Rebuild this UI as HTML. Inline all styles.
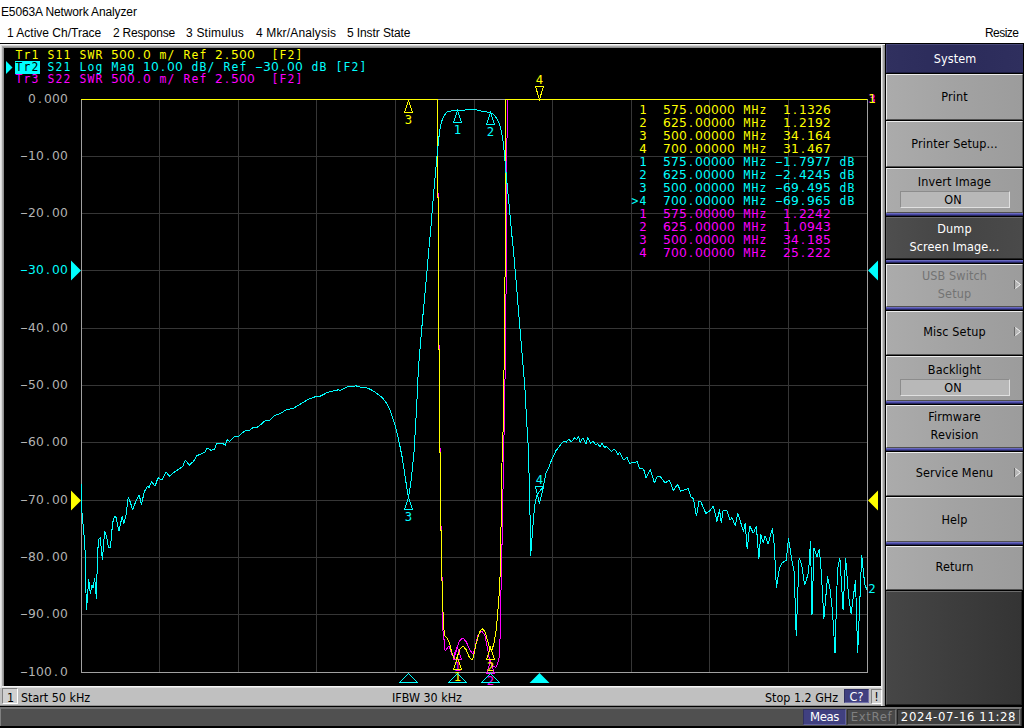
<!DOCTYPE html>
<html><head><meta charset="utf-8"><title>E5063A Network Analyzer</title>
<style>
html,body{margin:0;padding:0}
body{width:1024px;height:728px;position:relative;overflow:hidden;background:#fff;font-family:"Liberation Sans",sans-serif;}
div,span,i{position:absolute;box-sizing:border-box}
.ui{font-size:12px;color:#000;white-space:nowrap;line-height:14px}
#title{left:1px;top:5px;letter-spacing:-.13px}
.mi{top:26px}
#frame{left:0;top:43px;width:1024px;height:685px;background:#000}
#ft{left:0;top:44px;width:885px;height:4px;background:linear-gradient(#f8f8f8 0 1px,#d4d4d4 1px 2px,#a8a8a8 2px 3px,#909090 3px 4px)}
#fL{left:0;top:44px;width:4px;height:662px;background:linear-gradient(90deg,#e8e8e8 0 1px,#d8d8d8 1px 2px,#a8a8a8 2px 3px,#909090 3px 4px);clip-path:polygon(0 0,4px 4px,4px 100%,0 100%)}
#fr{left:881px;top:45px;width:4px;height:661px;background:linear-gradient(90deg,#f0f0f0 0 1px,#c8c8c8 1px 2px,#a0a0a0 2px 3px,#8c8c8c 3px 4px)}
#scr{left:4px;top:48px;width:877px;height:638px;background:#000}
#fb{left:2px;top:686px;width:879px;height:2px;background:linear-gradient(#f4f4f4 0 1px,#dcdcdc 1px 2px)}
#stat{left:0;top:688px;width:881px;height:18px;background:#c0c0c0;border-bottom:1px solid #909090}
#ch{left:2px;top:688px;width:16px;height:16px;background:#d0d0d0;border:1px solid #808080;border-right-color:#fff;border-bottom-color:#fff}
.tx{font-family:"DejaVu Sans Condensed","DejaVu Sans","Liberation Sans",sans-serif;font-stretch:condensed;font-size:12.5px;letter-spacing:.12px;white-space:nowrap}
.st{top:690px;line-height:15px;color:#000;font-size:12.4px;letter-spacing:0}
#cq{left:844px;top:689px;width:25px;height:14px;background:#404080;color:#fff;text-align:center;line-height:13px;border:1px solid #7070a8;border-top-color:#303060;border-left-color:#303060}
#ex{left:871px;top:689px;width:11px;height:15px;background:#d0d0d0;color:#000;text-align:center;line-height:13px;border:1px solid #fff;border-top-color:#808080;border-left-color:#808080}
#bot2{left:0;top:707px;width:1022px;height:19px;border-right:1px solid #303030;background:#505050;border-top:2px solid #757575;border-left:1px solid #808080}
.sb{top:709px;height:16px;font-size:13px;letter-spacing:0;line-height:14px;text-align:center}
#meas{left:803px;width:43px;letter-spacing:-.4px;background:#404080;color:#fff;border:1px solid #6060a0;border-top-color:#303060;border-left-color:#303060}
#ext{left:847px;width:49px;letter-spacing:.6px;background:#484848;color:#808080;border:1px solid #707070;border-top-color:#303030;border-left-color:#303030}
#dt{left:897px;width:123px;letter-spacing:.62px;background:#404040;color:#fff;border:1px solid #808080;border-top-color:#202020;border-left-color:#202020}
#skd{left:886px;top:591px;width:136px;height:114px;background:linear-gradient(90deg,#464646,#343434);border:1px solid #202020;border-top-color:#6c6c6c;border-left-color:#5a5a5a}
#sys{left:886px;top:44px;width:137px;height:29px;background:linear-gradient(90deg,#30305f,#2b2b5a 50%,#2f2f5e);color:#fff;border-top:1px solid #484878;border-left:1px solid #484878;border-bottom:1px solid #1c1c40}
#sys span{left:0;width:100%;text-align:center;top:6px;line-height:16px}
.sk{left:886px;width:137px;background:linear-gradient(90deg,#ababab,#a2a2a2 55%,#9c9c9c);border-top:1px solid #ececec;border-left:1px solid #ececec;border-bottom:1px solid #505050;border-right:1px solid #606060;color:#000}
.lb{left:-1px;width:137px;text-align:center;line-height:16px}
.val{left:13px;width:110px;height:17px;background:#b8b8b8;border:1px solid #8c8c8c;border-right-color:#e0e0e0;border-bottom-color:#e0e0e0;position:absolute;box-sizing:border-box}
.sk.sel{background:linear-gradient(90deg,#4e4e4e,#444 50%,#4a4a4a);color:#fff;border-color:#6a6a6a #303030 #202020 #5a5a5a}
.sk.dis{color:#737373}
.bar{left:886px;width:137px;height:3px;background:linear-gradient(#6a6ac0 0 1px,#4646a0 1px 2px,#26265c 2px 3px)}
svg{position:absolute;left:0;top:0}
svg text{font-family:"DejaVu Sans Mono","Liberation Mono",monospace;font-size:12.3px;text-anchor:middle}
svg .n{font-family:"DejaVu Sans","Liberation Sans",sans-serif}
svg .a{font-size:11.4px}
</style></head><body>
<div id="title" class="ui">E5063A Network Analyzer</div>
<div class="ui mi" style="left:7px">1 Active Ch/Trace</div>
<div class="ui mi" style="left:113px;letter-spacing:-.2px">2 Response</div>
<div class="ui mi" style="left:186px;letter-spacing:.2px">3 Stimulus</div>
<div class="ui mi" style="left:256px;letter-spacing:.15px">4 Mkr/Analysis</div>
<div class="ui mi" style="left:347px;letter-spacing:-.1px">5 Instr State</div>
<div class="ui mi" style="left:985px;letter-spacing:-.55px">Resize</div>
<div id="frame"></div><div id="ft"></div><div id="fL"></div><div id="fr"></div><div id="scr"></div><div id="fb"></div>
<div id="stat"></div><div id="ch"></div>
<div class="tx st" style="left:7px">1</div>
<div class="tx st" style="left:21px">Start 50 kHz</div>
<div class="tx st" style="left:392px">IFBW 30 kHz</div>
<div class="tx st" style="left:765px">Stop 1.2 GHz</div>
<div id="cq" class="tx">C?</div><div id="ex" class="tx">!</div>
<div id="skd"></div>
<div id="sys"><span class="tx">System</span></div>
<div class="tx">
<div class="sk" style="top:74px;height:46px"><span class="lb" style="top:14px">Print</span></div>
<div class="sk" style="top:121px;height:46px"><span class="lb" style="top:14px">Printer Setup...</span></div>
<div class="sk" style="top:168px;height:45px"><span class="lb" style="top:5px">Invert Image</span><b class="val" style="top:22px"></b><span class="lb" style="top:23px;left:-2.5px">ON</span></div>
<div class="bar" style="top:213px"></div>
<div class="sk sel" style="top:217px;height:42px"><span class="lb" style="top:3px">Dump</span><span class="lb" style="top:21px">Screen Image...</span></div>
<div class="bar" style="top:260px"></div>
<div class="sk dis" style="top:264px;height:43px"><span class="lb" style="top:3px">USB Switch</span><span class="lb" style="top:21px">Setup</span></div>
<div class="bar" style="top:307px"></div>
<div class="sk" style="top:311px;height:44px"><span class="lb" style="top:12px">Misc Setup</span></div>
<div class="sk" style="top:356px;height:45px"><span class="lb" style="top:5px">Backlight</span><b class="val" style="top:22px"></b><span class="lb" style="top:23px;left:-2.5px">ON</span></div>
<div class="bar" style="top:401px"></div>
<div class="sk" style="top:405px;height:43px"><span class="lb" style="top:3px">Firmware</span><span class="lb" style="top:21px">Revision</span></div>
<div class="bar" style="top:448px"></div>
<div class="sk" style="top:452px;height:44px"><span class="lb" style="top:12px">Service Menu</span></div>
<div class="sk" style="top:497px;height:45px"><span class="lb" style="top:14px">Help</span></div>
<div class="bar" style="top:542px"></div>
<div class="sk" style="top:546px;height:44px"><span class="lb" style="top:12px">Return</span></div>
</div>
<div id="bot2"></div>
<div id="meas" class="tx sb">Meas</div><div id="ext" class="tx sb">ExtRef</div><div id="dt" class="tx sb">2024-07-16 11:28</div>
<svg width="1024" height="728" viewBox="0 0 1024 728">
<path d="M159.5 99V673M81 156.5H868M238.5 99V673M81 213.5H868M316.5 99V673M81 270.5H868M395.5 99V673M81 328.5H868M474.5 99V673M81 385.5H868M552.5 99V673M81 442.5H868M631.5 99V673M81 500.5H868M709.5 99V673M81 557.5H868M788.5 99V673M81 614.5H868" stroke="#363636" stroke-width="1" fill="none" shape-rendering="crispEdges"/>
<rect x="81.5" y="99.5" width="786" height="573" stroke="#a0a0a0" stroke-width="1" fill="none" shape-rendering="crispEdges"/>
<text fill="#ffff00" y="59"><tspan class="a" x="19 27 35">Tr1</tspan><tspan class="a" x="43 51 59 67"> S11</tspan><tspan class="a" x="75 83 91 99"> SWR</tspan><tspan class="n" x="107 115 123 131 139 147"> 500.0</tspan><tspan class="a" x="155 163 171"> m/</tspan><tspan class="a" x="179 187 195 203"> Ref</tspan><tspan class="n" x="211 219 227 235 243 251"> 2.500</tspan><tspan class="a" x="267 275 283 291 299"> [F2]</tspan></text>
<rect x="15" y="61" width="25" height="13" fill="#00ffff"/>
<path d="M6 61V74L12.5 67.5Z" fill="#00ffff"/>
<text fill="#000" y="71"><tspan class="a" x="19 27 35">Tr2</tspan></text>
<text fill="#00ffff" y="71"><tspan class="a" x="51 59 67">S21</tspan><tspan class="a" x="75 83 91 99"> Log</tspan><tspan class="a" x="107 115 123 131"> Mag</tspan><tspan class="n" x="139 147 155 163 171 179"> 10.00</tspan><tspan class="a" x="187 195 203 211"> dB/</tspan><tspan class="a" x="219 227 235 243"> Ref</tspan><tspan x="251"> </tspan><tspan class="d" x="259" textLength="14" lengthAdjust="spacingAndGlyphs">-</tspan><tspan class="n" x="267 275 283 291 299">30.00</tspan><tspan class="a" x="307 315 323"> dB</tspan><tspan class="a" x="331 339 347 355 363"> [F2]</tspan></text>
<text fill="#ff00ff" y="83"><tspan class="a" x="19 27 35">Tr3</tspan><tspan class="a" x="43 51 59 67"> S22</tspan><tspan class="a" x="75 83 91 99"> SWR</tspan><tspan class="n" x="107 115 123 131 139 147"> 500.0</tspan><tspan class="a" x="155 163 171"> m/</tspan><tspan class="a" x="179 187 195 203"> Ref</tspan><tspan class="n" x="211 219 227 235 243 251"> 2.500</tspan><tspan class="a" x="267 275 283 291 299"> [F2]</tspan></text>
<text fill="#b4b4b4" y="103"><tspan class="n" x="32 40 48 56 64">0.000</tspan></text>
<text fill="#b4b4b4" y="160"><tspan class="d" x="24" textLength="14" lengthAdjust="spacingAndGlyphs">-</tspan><tspan class="n" x="32 40 48 56 64">10.00</tspan></text>
<text fill="#b4b4b4" y="217"><tspan class="d" x="24" textLength="14" lengthAdjust="spacingAndGlyphs">-</tspan><tspan class="n" x="32 40 48 56 64">20.00</tspan></text>
<text fill="#00ffff" y="274"><tspan class="d" x="24" textLength="14" lengthAdjust="spacingAndGlyphs">-</tspan><tspan class="n" x="32 40 48 56 64">30.00</tspan></text>
<text fill="#b4b4b4" y="332"><tspan class="d" x="24" textLength="14" lengthAdjust="spacingAndGlyphs">-</tspan><tspan class="n" x="32 40 48 56 64">40.00</tspan></text>
<text fill="#b4b4b4" y="389"><tspan class="d" x="24" textLength="14" lengthAdjust="spacingAndGlyphs">-</tspan><tspan class="n" x="32 40 48 56 64">50.00</tspan></text>
<text fill="#b4b4b4" y="446"><tspan class="d" x="24" textLength="14" lengthAdjust="spacingAndGlyphs">-</tspan><tspan class="n" x="32 40 48 56 64">60.00</tspan></text>
<text fill="#b4b4b4" y="504"><tspan class="d" x="24" textLength="14" lengthAdjust="spacingAndGlyphs">-</tspan><tspan class="n" x="32 40 48 56 64">70.00</tspan></text>
<text fill="#b4b4b4" y="561"><tspan class="d" x="24" textLength="14" lengthAdjust="spacingAndGlyphs">-</tspan><tspan class="n" x="32 40 48 56 64">80.00</tspan></text>
<text fill="#b4b4b4" y="618"><tspan class="d" x="24" textLength="14" lengthAdjust="spacingAndGlyphs">-</tspan><tspan class="n" x="32 40 48 56 64">90.00</tspan></text>
<text fill="#b4b4b4" y="676"><tspan class="d" x="24" textLength="14" lengthAdjust="spacingAndGlyphs">-</tspan><tspan class="n" x="32 40 48 56 64">100.0</tspan></text>
<polyline points="81.0,99.0 437.5,99.0 437.5,193.0 438.5,194.0 438.5,345.0 439.5,346.0 439.5,448.0 440.5,449.0 440.5,526.0 441.5,527.0 441.5,576.0 442.3,578.0 442.3,612.9 443.1,632.6 444.4,642.5 445.1,650.8 447.2,648.3 448.8,645.8 450.5,649.9 452.1,654.9 453.8,655.7 456.3,649.1 459.6,640.9 462.9,637.9 466.2,641.7 469.4,649.1 472.7,654.1 474.4,650.8 477.7,635.9 481.8,631.0 485.1,635.9 487.6,649.1 490.0,662.3 492.5,665.6 495.8,667.2 497.5,664.0 499.1,657.4 499.9,642.5 500.8,617.8 500.9,595.0 501.9,551.0 502.9,495.0 503.9,441.0 504.7,400.0 505.7,334.0 506.5,233.0 507.0,140.0 507.3,99.0 867.0,99.0" stroke="#ff00ff" stroke-width="1" fill="none" stroke-linejoin="bevel" shape-rendering="crispEdges"/>
<polyline points="81.0,99.0 437.5,99.0 437.5,197.0 438.5,198.0 438.5,349.0 439.5,350.0 439.5,452.0 440.5,453.0 440.5,530.0 441.5,531.0 441.5,580.0 442.4,582.0 442.6,600.0 443.1,614.5 443.9,629.3 444.7,635.9 447.2,638.4 449.7,643.3 451.3,650.8 453.8,658.2 455.4,659.8 457.6,655.7 460.4,648.3 463.2,646.1 466.2,649.9 469.4,657.4 471.9,659.8 473.6,656.5 476.0,644.2 479.3,632.6 482.3,628.5 485.1,631.8 487.6,640.9 490.0,649.1 491.7,650.8 494.2,642.5 496.2,629.3 497.5,616.2 499.1,594.7 500.4,570.0 501.2,515.0 502.0,463.0 503.3,423.0 504.5,334.0 505.5,223.0 505.8,99.0 867.0,99.0" stroke="#ffff00" stroke-width="1" fill="none" stroke-linejoin="bevel" shape-rendering="crispEdges"/>
<polyline points="81.5,483.7 82.0,513.0 84.3,538.0 85.4,557.0 86.0,593.0 86.5,610.0 88.7,579.0 90.3,593.6 92.0,585.0 93.0,587.6 94.7,578.0 96.4,598.6 97.5,554.6 98.6,539.5 100.2,537.6 102.4,559.6 104.6,531.3 106.3,535.4 108.5,547.7 110.4,547.7 112.6,523.0 114.5,516.0 116.2,517.5 118.9,531.3 122.2,516.0 123.8,523.8 126.0,514.8 128.2,497.5 130.4,502.4 132.6,510.0 135.9,501.0 139.2,494.7 141.4,505.0 144.2,492.0 147.5,486.0 149.1,488.0 151.3,481.8 155.2,486.0 157.9,477.7 161.8,480.0 166.2,472.0 169.5,476.3 174.4,472.0 182.6,466.7 185.4,459.8 189.2,465.3 193.6,461.2 196.9,455.7 204.6,452.4 207.4,448.0 210.7,450.2 214.2,449.7 216.7,443.4 222.7,443.4 225.2,445.3 227.1,439.8 229.3,441.4 234.8,436.5 238.1,437.0 241.7,433.2 245.8,430.4 248.6,431.0 254.0,426.9 256.8,427.7 262.3,423.3 265.5,420.3 269.6,420.3 275.1,415.3 280.6,413.4 286.1,409.8 293.0,408.5 301.2,403.5 309.5,398.8 316.3,396.4 320.4,396.1 327.3,392.5 338.3,389.8 339.7,390.6 347.9,386.5 356.2,385.9 363.0,387.9 367.1,387.9 371.3,389.8 376.8,393.4 382.3,397.5 386.4,403.0 390.5,411.2 394.6,423.6 398.7,440.0 402.3,457.9 405.6,479.9 408.4,497.7 410.5,485.4 413.8,455.2 415.2,432.0 416.7,405.8 418.4,368.7 421.7,329.0 427.1,269.8 428.5,253.0 430.8,228.4 434.0,188.8 436.5,161.6 438.2,144.3 439.5,131.9 441.4,122.0 443.9,115.9 446.9,112.1 451.8,110.7 457.3,110.2 464.2,110.2 469.1,109.2 475.3,109.7 481.5,111.2 487.7,112.1 490.1,112.6 493.9,114.6 497.6,119.6 500.0,125.7 502.5,136.9 504.2,151.7 505.7,169.0 507.5,188.8 509.9,213.5 512.4,240.7 513.6,252.0 516.6,287.0 520.6,336.5 524.8,386.0 526.6,420.0 528.1,444.7 529.3,481.8 530.1,518.9 530.6,555.5 531.6,543.6 533.5,518.9 534.8,505.3 536.5,496.2 539.5,491.5 541.5,489.0 543.7,485.0 544.7,479.3 546.1,472.5 548.4,468.2 551.3,460.8 555.8,450.9 560.7,444.7 563.7,441.0 566.2,442.3 568.7,439.3 571.1,441.8 574.8,437.8 576.8,439.8 578.5,436.1 580.3,442.7 582.7,437.8 586.0,444.2 587.7,437.3 590.9,443.5 592.6,441.0 595.9,444.7 597.6,443.5 600.0,446.7 602.0,443.5 604.5,447.2 607.0,446.7 611.4,451.7 613.2,449.7 615.6,450.2 618.1,454.6 619.3,452.1 623.8,460.1 626.8,457.1 629.7,463.3 634.2,462.5 637.2,461.5 639.6,469.0 642.1,468.2 644.1,470.7 646.1,478.1 650.3,469.5 654.5,483.1 656.9,476.9 660.1,476.4 665.1,483.1 669.3,479.8 673.3,490.5 677.5,484.3 680.7,491.2 684.9,489.7 688.1,488.7 691.1,497.2 693.5,498.6 696.5,516.4 699.0,501.1 701.0,502.1 705.9,513.5 709.6,511.0 713.3,506.1 717.0,521.4 719.5,509.5 721.2,522.6 723.2,510.3 726.9,510.3 730.1,520.1 731.9,517.7 735.3,525.9 737.8,513.5 741.0,523.4 743.5,532.0 745.2,523.4 747.2,549.3 749.7,525.9 753.4,533.3 756.4,525.9 758.8,559.2 760.8,534.5 763.3,543.2 765.0,535.7 768.2,543.9 772.4,528.3 774.4,546.9 776.4,587.7 779.3,569.1 781.8,563.0 786.3,560.5 788.5,538.2 791.7,559.2 794.2,571.6 796.2,635.9 799.1,558.0 801.6,564.2 804.6,585.2 808.5,572.8 810.5,541.4 812.0,614.9 814.0,548.1 816.9,556.8 819.4,548.9 821.4,574.1 823.9,618.6 827.6,576.5 830.0,588.9 832.5,611.2 835.0,653.2 837.5,569.1 839.9,558.0 843.1,609.9 845.6,558.0 848.6,596.3 851.1,613.6 855.5,580.3 857.7,653.2 861.7,555.5 864.7,584.0 867.0,590.1" stroke="#00ffff" stroke-width="1" fill="none" stroke-linejoin="bevel" shape-rendering="crispEdges"/>
<path d="M71 490.5V510.5L81 500.5Z M878 490.5V510.5L868 500.5Z" fill="#ffff00"/>
<path d="M71 260.5V280.5L81 270.5Z M878 260.5V280.5L868 270.5Z" fill="#00ffff"/>
<path d="M457.5 647.5L453.5 659.5H461.5Z" stroke="#ff00ff" fill="none" stroke-width="1" shape-rendering="crispEdges"/>
<text fill="#ff00ff" y="670.5"><tspan class="d" x="457.5">1</tspan></text>
<path d="M490.5 661.5L486.5 673.5H494.5Z" stroke="#ff00ff" fill="none" stroke-width="1" shape-rendering="crispEdges"/>
<text fill="#ff00ff" y="684.5"><tspan class="d" x="490.5">2</tspan></text>
<path d="M457.5 657.5L453.5 669.5H461.5Z" stroke="#ffff00" fill="none" stroke-width="1" shape-rendering="crispEdges"/>
<text fill="#ffff00" y="680.5"><tspan class="d" x="457.5">1</tspan></text>
<path d="M490.5 647.5L486.5 659.5H494.5Z" stroke="#ffff00" fill="none" stroke-width="1" shape-rendering="crispEdges"/>
<text fill="#ffff00" y="670.5"><tspan class="d" x="490.5">2</tspan></text>
<path d="M408.5 100.5L404.5 112.5H412.5Z" stroke="#ffff00" fill="none" stroke-width="1" shape-rendering="crispEdges"/>
<text fill="#ffff00" y="123.5"><tspan class="d" x="408.5">3</tspan></text>
<path d="M539.5 99.5L535.5 86.5H543.5Z" stroke="#ffff00" fill="none" stroke-width="1" shape-rendering="crispEdges"/>
<text fill="#ffff00" y="83.5"><tspan class="d" x="539.5">4</tspan></text>
<path d="M457.5 110.5L453.5 122.5H461.5Z" stroke="#00ffff" fill="none" stroke-width="1" shape-rendering="crispEdges"/>
<text fill="#00ffff" y="133.5"><tspan class="d" x="457.5">1</tspan></text>
<path d="M490.5 112.5L486.5 124.5H494.5Z" stroke="#00ffff" fill="none" stroke-width="1" shape-rendering="crispEdges"/>
<text fill="#00ffff" y="135.5"><tspan class="d" x="490.5">2</tspan></text>
<path d="M408.5 497.5L404.5 509.5H412.5Z" stroke="#00ffff" fill="none" stroke-width="1" shape-rendering="crispEdges"/>
<text fill="#00ffff" y="520.5"><tspan class="d" x="408.5">3</tspan></text>
<path d="M539.5 503.5L535.5 486.5H543.5Z" stroke="#00ffff" fill="none" stroke-width="1" shape-rendering="crispEdges"/>
<text fill="#00ffff" y="483.5"><tspan class="d" x="539.5">4</tspan></text>
<path d="M408.5 673.5L399.5 682.5H417.5Z" stroke="#00ffff" fill="none" stroke-width="1" shape-rendering="crispEdges"/>
<path d="M457.5 673.5L448.5 682.5H466.5Z" stroke="#00ffff" fill="none" stroke-width="1" shape-rendering="crispEdges"/>
<path d="M490.5 673.5L481.5 682.5H499.5Z" stroke="#00ffff" fill="none" stroke-width="1" shape-rendering="crispEdges"/>
<path d="M539.5 673L529.5 683H549.5Z" fill="#00ffff"/>
<text fill="#ff00ff" y="103"><tspan class="d" x="872">3</tspan></text>
<text fill="#ffff00" y="103"><tspan class="d" x="872">1</tspan></text>
<text fill="#00ffff" y="593"><tspan class="d" x="872">2</tspan></text>
<text fill="#ffff00" y="114"><tspan class="d" x="643">1</tspan><tspan class="n" x="659 667 675 683 691 699 707 715 723 731"> 575.00000</tspan><tspan class="a" x="739 747 755 763"> MHz</tspan><tspan class="n" x="779 787 795 803 811 819 827"> 1.1326</tspan></text>
<text fill="#ffff00" y="127"><tspan class="d" x="643">2</tspan><tspan class="n" x="659 667 675 683 691 699 707 715 723 731"> 625.00000</tspan><tspan class="a" x="739 747 755 763"> MHz</tspan><tspan class="n" x="779 787 795 803 811 819 827"> 1.2192</tspan></text>
<text fill="#ffff00" y="140"><tspan class="d" x="643">3</tspan><tspan class="n" x="659 667 675 683 691 699 707 715 723 731"> 500.00000</tspan><tspan class="a" x="739 747 755 763"> MHz</tspan><tspan class="n" x="779 787 795 803 811 819 827"> 34.164</tspan></text>
<text fill="#ffff00" y="153"><tspan class="d" x="643">4</tspan><tspan class="n" x="659 667 675 683 691 699 707 715 723 731"> 700.00000</tspan><tspan class="a" x="739 747 755 763"> MHz</tspan><tspan class="n" x="779 787 795 803 811 819 827"> 31.467</tspan></text>
<text fill="#00ffff" y="166"><tspan class="d" x="643">1</tspan><tspan class="n" x="659 667 675 683 691 699 707 715 723 731"> 575.00000</tspan><tspan class="a" x="739 747 755 763"> MHz</tspan><tspan x="771"> </tspan><tspan class="d" x="779" textLength="14" lengthAdjust="spacingAndGlyphs">-</tspan><tspan class="n" x="787 795 803 811 819 827">1.7977</tspan><tspan class="a" x="835 843 851"> dB</tspan></text>
<text fill="#00ffff" y="179"><tspan class="d" x="643">2</tspan><tspan class="n" x="659 667 675 683 691 699 707 715 723 731"> 625.00000</tspan><tspan class="a" x="739 747 755 763"> MHz</tspan><tspan x="771"> </tspan><tspan class="d" x="779" textLength="14" lengthAdjust="spacingAndGlyphs">-</tspan><tspan class="n" x="787 795 803 811 819 827">2.4245</tspan><tspan class="a" x="835 843 851"> dB</tspan></text>
<text fill="#00ffff" y="192"><tspan class="d" x="643">3</tspan><tspan class="n" x="659 667 675 683 691 699 707 715 723 731"> 500.00000</tspan><tspan class="a" x="739 747 755 763"> MHz</tspan><tspan x="771"> </tspan><tspan class="d" x="779" textLength="14" lengthAdjust="spacingAndGlyphs">-</tspan><tspan class="n" x="787 795 803 811 819 827">69.495</tspan><tspan class="a" x="835 843 851"> dB</tspan></text>
<text fill="#00ffff" y="205"><tspan class="a" x="635 643">&gt;4</tspan><tspan class="n" x="659 667 675 683 691 699 707 715 723 731"> 700.00000</tspan><tspan class="a" x="739 747 755 763"> MHz</tspan><tspan x="771"> </tspan><tspan class="d" x="779" textLength="14" lengthAdjust="spacingAndGlyphs">-</tspan><tspan class="n" x="787 795 803 811 819 827">69.965</tspan><tspan class="a" x="835 843 851"> dB</tspan></text>
<text fill="#ff00ff" y="218"><tspan class="d" x="643">1</tspan><tspan class="n" x="659 667 675 683 691 699 707 715 723 731"> 575.00000</tspan><tspan class="a" x="739 747 755 763"> MHz</tspan><tspan class="n" x="779 787 795 803 811 819 827"> 1.2242</tspan></text>
<text fill="#ff00ff" y="231"><tspan class="d" x="643">2</tspan><tspan class="n" x="659 667 675 683 691 699 707 715 723 731"> 625.00000</tspan><tspan class="a" x="739 747 755 763"> MHz</tspan><tspan class="n" x="779 787 795 803 811 819 827"> 1.0943</tspan></text>
<text fill="#ff00ff" y="244"><tspan class="d" x="643">3</tspan><tspan class="n" x="659 667 675 683 691 699 707 715 723 731"> 500.00000</tspan><tspan class="a" x="739 747 755 763"> MHz</tspan><tspan class="n" x="779 787 795 803 811 819 827"> 34.185</tspan></text>
<text fill="#ff00ff" y="257"><tspan class="d" x="643">4</tspan><tspan class="n" x="659 667 675 683 691 699 707 715 723 731"> 700.00000</tspan><tspan class="a" x="739 747 755 763"> MHz</tspan><tspan class="n" x="779 787 795 803 811 819 827"> 25.222</tspan></text>
<path d="M1015 280L1021 284.5L1015 289Z" fill="#b6b6b6"/><path d="M1015.5 280.5L1020.5 284.5L1015.5 288.5" stroke="#f4f4f4" fill="none"/><path d="M1014.5 280V289" stroke="#686868"/>
<path d="M1015 327L1021 331.5L1015 336Z" fill="#b6b6b6"/><path d="M1015.5 327.5L1020.5 331.5L1015.5 335.5" stroke="#f4f4f4" fill="none"/><path d="M1014.5 327V336" stroke="#686868"/>
<path d="M1015 468L1021 472.5L1015 477Z" fill="#b6b6b6"/><path d="M1015.5 468.5L1020.5 472.5L1015.5 476.5" stroke="#f4f4f4" fill="none"/><path d="M1014.5 468V477" stroke="#686868"/>
</svg>
</body></html>
